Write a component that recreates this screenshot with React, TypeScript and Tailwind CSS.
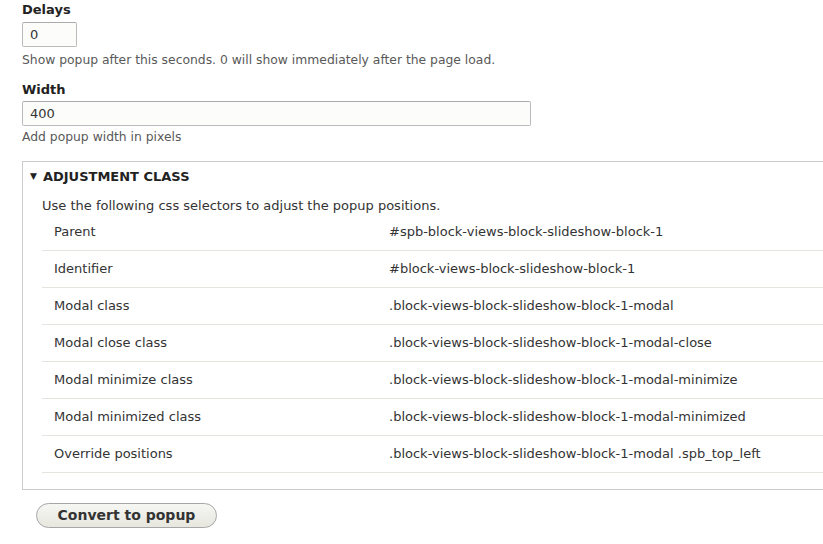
import React from "react";

const rows: [string, string][] = [
  ["Parent", "#spb-block-views-block-slideshow-block-1"],
  ["Identifier", "#block-views-block-slideshow-block-1"],
  ["Modal class", ".block-views-block-slideshow-block-1-modal"],
  ["Modal close class", ".block-views-block-slideshow-block-1-modal-close"],
  ["Modal minimize class", ".block-views-block-slideshow-block-1-modal-minimize"],
  ["Modal minimized class", ".block-views-block-slideshow-block-1-modal-minimized"],
  ["Override positions", ".block-views-block-slideshow-block-1-modal .spb_top_left"],
];

export default function App() {
  return (
    <div className="w-[823px] h-[544px] overflow-hidden bg-white font-['DejaVu_Sans',sans-serif] text-[13px] text-[#333]">
      <div className="pl-[22px]">
        <div className="h-[20px] leading-[20px] font-bold text-[#222]">Delays</div>
        <div className="mt-[2px] w-[55px] h-[25px] border border-[#bbb] border-t-[#aaa] rounded-[2px] bg-[#fcfcfa] pl-[7px] leading-[23px]">
          0
        </div>
        <div className="mt-[5px] h-[17px] leading-[17px] text-[12.35px] text-[#595959]">
          Show popup after this seconds. 0 will show immediately after the page load.
        </div>
        <div className="mt-[11px] h-[20px] leading-[20px] font-bold text-[#222]">Width</div>
        <div className="mt-[1px] w-[509px] h-[25px] border border-[#bbb] border-t-[#aaa] rounded-[2px] bg-[#fcfcfa] pl-[7px] leading-[23px]">
          400
        </div>
        <div className="mt-[3px] h-[17px] leading-[17px] text-[12.35px] text-[#595959]">
          Add popup width in pixels
        </div>
        <div className="mt-[15px] w-[830px] border border-[#ccc] pb-[16px]">
          <div className="h-[23px] flex items-end pl-[7px] font-bold text-[#222]">
            <span className="text-[9px] mr-[6px] leading-[17px]">▼</span>
            <span className="leading-[17px]">ADJUSTMENT CLASS</span>
          </div>
          <div className="pl-[19px]">
            <div className="mt-[12px] h-[17px] leading-[17px]">
              Use the following css selectors to adjust the popup positions.
            </div>
            <div>
              {rows.map(([k, v]) => (
                <div key={k} className="flex h-[37px] border-b border-[#e6e4df] items-center">
                  <div className="w-[347px] pl-[12px]">{k}</div>
                  <div>{v}</div>
                </div>
              ))}
            </div>
          </div>
        </div>
        <button className="mt-[13px] ml-[14px] w-[181px] h-[25px] rounded-full border border-[#a6a6a6] bg-gradient-to-b from-[#f6f6f3] to-[#e7e7df] font-bold text-[#333] text-[14px] leading-[23px] text-center">
          Convert to popup
        </button>
      </div>
    </div>
  );
}
